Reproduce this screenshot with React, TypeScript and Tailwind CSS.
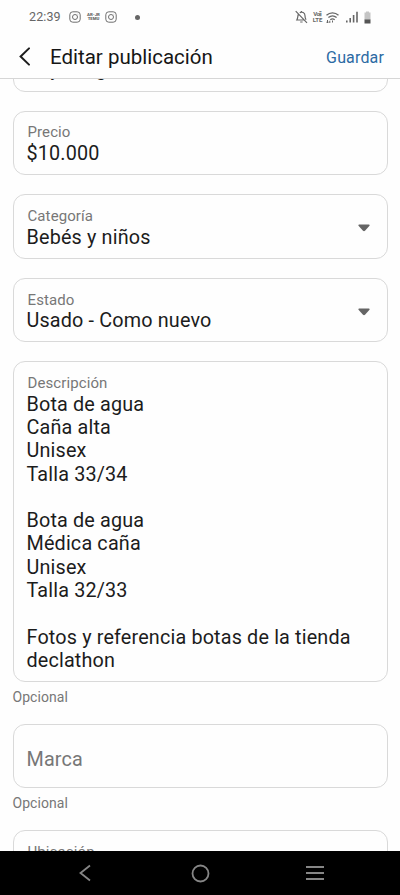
import type { ReactNode } from "react";

const description = `Bota de agua
Caña alta
Unisex
Talla 33/34

Bota de agua
Médica caña
Unisex
Talla 32/33

Fotos y referencia botas de la tienda
declathon`;

const InstagramIcon = () => (
  <svg width="12" height="12" viewBox="0 0 12 12" fill="none" stroke="#6f6f6f">
    <rect x="0.8" y="0.8" width="10.4" height="10.4" rx="3" />
    <circle cx="6" cy="6" r="2.5" />
    <circle cx="8.9" cy="3.1" r="0.4" fill="#6f6f6f" stroke="none" />
  </svg>
);

const StatusBar = () => {
  return (
    <div className="flex h-[34px] items-center justify-between pl-[29px] pr-[29px] text-[#666]">
      <div className="flex items-center">
        <span className="w-[32px] text-[12.5px] leading-none tracking-[0.1px]">22:39</span>
        <span className="ml-[8px]"><InstagramIcon /></span>
        <span className="ml-[6px] w-[13px] whitespace-nowrap text-center text-[4.3px] font-black leading-[4px]">
          <span className="block">AR-JR</span>
          <span className="block">TEMU</span>
        </span>
        <span className="ml-[5px]"><InstagramIcon /></span>
        <span className="ml-[18px] size-[5px] rounded-full bg-[#666]" />
      </div>
      <div className="flex items-center">
        <svg width="13" height="14" viewBox="0 0 13 14" fill="none" stroke="#666" strokeWidth="1.2">
          <path d="M3.2 4.5C2.7 6 3 8 1.8 10H9M4.8 2.8C7 1.2 10 2.8 10 5.8C10 7.5 10.3 8.5 11 9.8M6.4 2V0.9M5.2 12H7.6M0.7 1.2L12 12.8" />
        </svg>
        <span className="ml-[4px] w-[11px] text-center text-[6px] font-bold leading-[6px]">
          <span className="block tracking-[-0.5px]">Voⅱ</span>
          <span className="block">LTE</span>
        </span>
        <svg className="ml-[3px]" width="13" height="13" viewBox="0 0 13 13" fill="none" stroke="#666" strokeWidth="1.3">
          <path d="M0.5 4.3C4 1 9 1 12.5 4.3M2.4 6.6C4.8 4.5 8.2 4.5 10.6 6.6M4.3 8.8C5.7 7.6 7.3 7.6 8.7 8.8" />
          <path d="M6.5 9.5V11.5M1.5 9V12M0.5 10.8L1.5 12L2.5 10.8M3.8 12V9.8" strokeWidth="1" />
        </svg>
        <svg className="ml-[7px]" width="12" height="12" viewBox="0 0 12 12" fill="#666">
          <path d="M0 9.5H1.6V11.5H0ZM3.4 7H5V11.5H3.4ZM6.8 4H8.4V11.5H6.8ZM10.2 0.8H11.8V11.5H10.2Z" />
        </svg>
        <svg className="ml-[6px]" width="7" height="13" viewBox="0 0 7 13">
          <path d="M2 0.5H5V1.5H6.5V9H0.5V1.5H2Z" fill="#c4c4c4" />
          <path d="M0.5 8.5H6.5V12.5H0.5Z" fill="#555" />
        </svg>
      </div>
    </div>
  );
};

const Header = () => {
  return (
    <div className="flex h-[44px] items-center pl-[18px] pr-[16px] pt-[2px]">
      <svg width="13" height="20" viewBox="0 0 13 20" fill="none" stroke="#1c1c1c" strokeWidth="2" strokeLinecap="round">
        <path d="M11 1.4L2.6 9.5L11 17.6" />
      </svg>
      <h1 className="ml-[19px] flex-1 text-[20.5px] leading-6 text-[#161616]">Editar publicación</h1>
      <button className="pt-px text-[16px] leading-6 tracking-[0.15px] text-[#2c6aa3]">Guardar</button>
    </div>
  );
};

const Caret = () => (
  <svg className="mt-[3px]" width="12" height="8" viewBox="0 0 12 8" fill="#656565">
    <path d="M1 0.5H11Q12 0.8 11.5 1.8L7 6.8Q6 7.6 5 6.8L0.5 1.8Q0 0.8 1 0.5Z" />
  </svg>
);

type FieldProps = {
  label: string;
  select?: boolean;
  children?: ReactNode;
};

const Field = ({ label, select, children }: FieldProps) => {
  return (
    <div className="flex min-h-[64.3px] items-center justify-between rounded-[12px] border border-[#d9d9d9] pl-[13px] pr-[17px]">
      <div className="self-start pt-[11.9px] pb-[8.9px]">
        <div className="pl-px text-[15px] leading-[18px] tracking-[0.1px] text-[#777]">{label}</div>
        <div className="whitespace-pre pt-[0.5px] text-[19.8px] leading-[23.3px] tracking-[0.16px] text-[#1c1c1c]">{children}</div>
      </div>
      {select && <Caret />}
    </div>
  );
};

const Optional = () => (
  <div className="pt-[6.5px] pb-[0.2px] text-[14px] leading-[17px] tracking-[0.05px] text-[#777]">Opcional</div>
);

const NavBar = () => {
  return (
    <div className="flex h-[44px] items-center bg-black">
      <svg className="ml-[78px]" width="14" height="18" viewBox="0 0 14 18" fill="none" stroke="#868686" strokeWidth="1.8">
        <path d="M12 1.5L2.5 9L12 16.5" />
      </svg>
      <svg className="ml-[99px]" width="19" height="19" viewBox="0 0 19 19" fill="none" stroke="#868686" strokeWidth="1.8">
        <circle cx="9.5" cy="9.5" r="8" />
      </svg>
      <svg className="ml-[96px]" width="18" height="16" viewBox="0 0 18 16" fill="#868686">
        <path d="M0 1H18V3H0ZM0 7H18V9H0ZM0 13H18V15H0Z" />
      </svg>
    </div>
  );
};

export default function App() {
  return (
    <div className="flex h-[895px] w-[400px] flex-col overflow-hidden bg-[#fefefe] font-['Roboto',sans-serif]">
      <StatusBar />
      <Header />
      <div className="h-[773px] overflow-hidden border-t border-[#d6d6d6] px-[12.5px]">
        <div className="-mt-[52px] flex flex-col gap-[19px]">
          <Field label="Título">Boy lluvga</Field>
          <Field label="Precio">$10.000</Field>
          <Field label="Categoría" select>Bebés y niños</Field>
          <Field label="Estado" select>Usado - Como nuevo</Field>
          <div>
            <Field label="Descripción">{description}</Field>
            <Optional />
          </div>
          <div className="-mt-[0.7px]">
            <div className="flex h-[64.3px] items-center rounded-[12px] border border-[#d9d9d9] px-[13px] pt-[7px] text-[19.8px] tracking-[0.16px] text-[#777]">
              Marca
            </div>
            <Optional />
          </div>
          <div className="-mt-[0.7px]">
            <Field label="Ubicación" />
          </div>
        </div>
      </div>
      <NavBar />
    </div>
  );
}
